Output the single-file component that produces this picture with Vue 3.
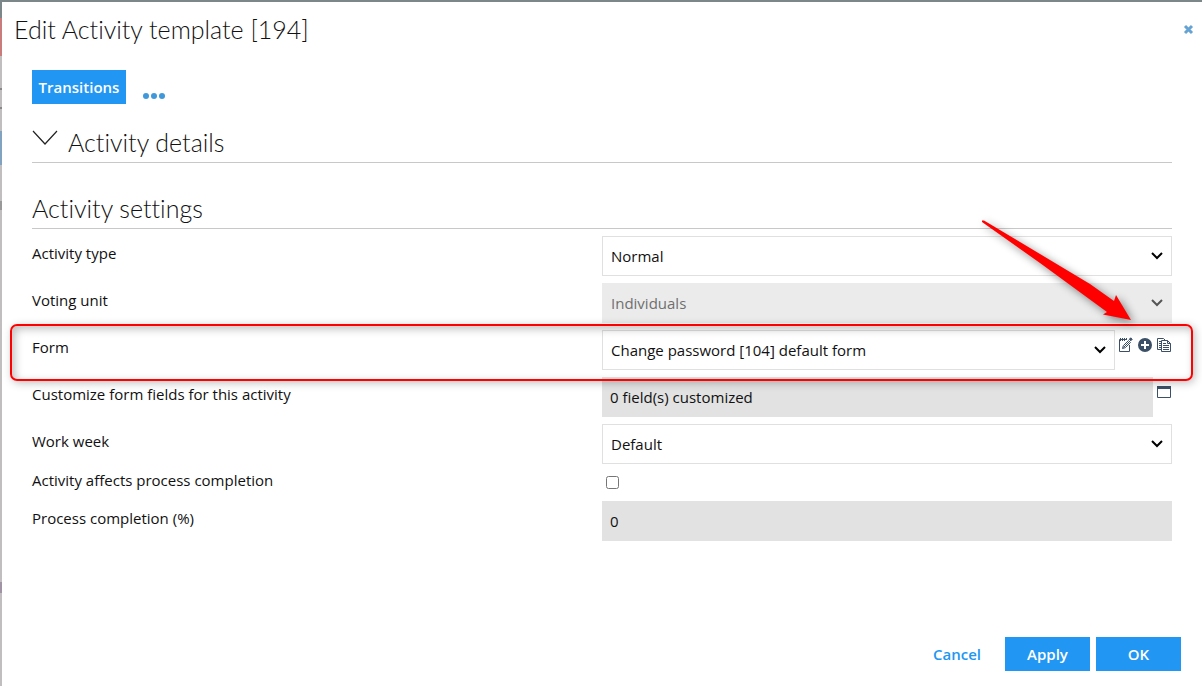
<script setup>
import { ref } from 'vue'

const activityType = ref('Normal')
const votingUnit = ref('Individuals')
const form = ref('Change password [104] default form')
const customized = ref('0 field(s) customized')
const workWeek = ref('Default')
const affects = ref(false)
const completion = ref('0')
</script>

<template>
  <div class="backdrop">
    <main class="dialog" role="dialog" aria-labelledby="dialog-title">
      <header class="head">
        <h1 id="dialog-title">Edit Activity template [194]</h1>
        <button class="icon-btn" type="button" aria-label="Close">
          <svg width="11" height="11" viewBox="0 0 11 11"><path d="M2 2l7 7M9 2l-7 7" stroke="#66a3d3" stroke-width="3" /></svg>
        </button>
      </header>

      <div class="body">
        <div class="toolbar">
          <button class="primary tab" type="button">Transitions</button>
          <button class="icon-btn more" type="button" aria-label="More">
            <svg width="24" height="8" viewBox="0 0 24 8" fill="#3f98da"><circle cx="4" cy="4" r="3" /><circle cx="12" cy="4" r="3" /><circle cx="20" cy="4" r="3" /></svg>
          </button>
        </div>

        <h2 class="section details">
          <button class="icon-btn" type="button" aria-label="Expand activity details">
            <svg width="26" height="16" viewBox="0 0 26 16"><path d="M1 1l12 13L25 1" fill="none" stroke="#222" stroke-width="1.2" /></svg>
          </button>
          <span>Activity details</span>
        </h2>
        <h2 class="section settings">Activity settings</h2>

        <form class="rows" @submit.prevent>
          <div class="row">
            <label for="type">Activity type</label>
            <div class="pick">
              <select id="type" v-model="activityType"><option>Normal</option></select>
              <svg width="14" height="10" viewBox="0 0 14 10"><path d="M2 2l5 5 5-5" /></svg>
            </div>
          </div>
          <div class="row">
            <label for="unit">Voting unit</label>
            <div class="pick off">
              <select id="unit" v-model="votingUnit" disabled><option>Individuals</option></select>
              <svg width="14" height="10" viewBox="0 0 14 10"><path d="M2 2l5 5 5-5" /></svg>
            </div>
          </div>
          <div class="row">
            <label for="form">Form</label>
            <div class="group">
              <div class="pick">
                <select id="form" v-model="form"><option>Change password [104] default form</option></select>
                <svg width="14" height="10" viewBox="0 0 14 10"><path d="M2 2l5 5 5-5" /></svg>
              </div>
              <div class="tools">
                <button class="icon-btn" type="button" aria-label="Edit form">
                  <svg width="15" height="16" viewBox="0 0 15 16" fill="none" stroke="#3b4f66">
                    <path d="M9 2.500H1.500v12h10V8" />
                    <path d="M2.500 1v3M4.500 1v3M6.500 1v3M8.500 1v2" />
                    <path d="M4.500 11.500l.8-2.800L10.500 3.500l2 2-5.200 5.200z" />
                    <path d="M5.500 10.500L11.500 4.500" />
                    <path d="M11.300 2.300l1.400-1.500 1.500 1.500-1.400 1.500z" fill="#3b4f66" />
                  </svg>
                </button>
                <button class="icon-btn" type="button" aria-label="Add form">
                  <svg width="14" height="16" viewBox="0 0 14 16"><circle cx="7" cy="8" r="7" fill="#3b4f66" /><path d="M7 4v8M3 8h8" stroke="#fff" stroke-width="2" /></svg>
                </button>
                <button class="icon-btn" type="button" aria-label="Copy form">
                  <svg width="15" height="16" viewBox="0 0 15 16" fill="none" stroke="#3b4f66">
                    <path d="M4 12.500H.5V1.500h6l2 2" />
                    <path d="M2 4.500h2M2 6.500h2M2 8.500h2M2 10.500h2" />
                    <path d="M4.500 3.500h6l3 3v8h-9z" fill="#fff" />
                    <path d="M10.500 3.500v3h3M6 6.500h3M6 8.500h6M6 10.500h6M6 12.500h6" />
                  </svg>
                </button>
              </div>
            </div>
            <div class="outline" aria-hidden="true"></div>
            <svg class="arrow" width="170" height="120" viewBox="0 0 170 120" aria-hidden="true">
              <path d="M2 10.500L4 10.500L60 44L110 74L134 91L136 85L151 110L123 104.500L127 102L60 53L2 12Z" fill="#f00" />
            </svg>
          </div>
          <div class="row">
            <label for="custom">Customize form fields for this activity</label>
            <div class="group custom">
              <input id="custom" v-model="customized" type="text" readonly />
              <div class="tools">
                <button class="icon-btn" type="button" aria-label="Open field list">
                  <svg width="14" height="12" viewBox="0 0 14 12"><path d="M.5.5h13v11H.5z" fill="#fff" stroke="#3b4f66" /><path d="M0 0h14v3H0z" fill="#3b4f66" /></svg>
                </button>
              </div>
            </div>
          </div>
          <div class="row">
            <label for="week">Work week</label>
            <div class="pick">
              <select id="week" v-model="workWeek"><option>Default</option></select>
              <svg width="14" height="10" viewBox="0 0 14 10"><path d="M2 2l5 5 5-5" /></svg>
            </div>
          </div>
          <div class="row check">
            <label for="affects">Activity affects process completion</label>
            <input id="affects" v-model="affects" type="checkbox" />
          </div>
          <div class="row">
            <label for="completion">Process completion (%)</label>
            <input id="completion" v-model="completion" type="text" readonly />
          </div>
        </form>
      </div>

      <footer class="foot">
        <button class="cancel" type="button">Cancel</button>
        <button class="primary" type="button">Apply</button>
        <button class="primary" type="button">OK</button>
      </footer>
    </main>
  </div>
</template>

<style>
body {
  margin: 0;
}
</style>

<style scoped>
.backdrop,
.backdrop * {
  box-sizing: border-box;
}
.backdrop {
  display: flex;
  min-height: 100vh;
  padding: 2px 0 0 2px;
  font: 15px/18px "Open Sans", sans-serif;
  color: #111;
  background:
    linear-gradient(#7b8788, #7b8788) top / 100% 2px no-repeat,
    linear-gradient(#7b8788 18px, #c87c7c 18px 56px, #c0bebe 56px 88px, #888 88px 90px, #c0bebe 90px 107px, #888 107px 109px, #c0bebe 109px 131px, #82a3c0 131px 165px, #c0bebe 165px 201px, #999 201px 210px, #c0bebe 210px 582px, #a094a4 582px 593px, #c0bebe 593px);
}
.dialog {
  flex: 1;
  display: flex;
  flex-direction: column;
  background: #fff;
}
button,
input,
select {
  margin: 0;
  font: inherit;
}
.icon-btn {
  display: block;
  padding: 0;
  border: 0;
  background: none;
  cursor: pointer;
}
.icon-btn svg {
  display: block;
}
.head {
  display: flex;
  align-items: center;
  justify-content: space-between;
  height: 54px;
  padding: 0 8px 0 12px;
}
h1,
h2 {
  margin: 0;
  font: 300 25px/32px Lato, sans-serif;
  font-variant-ligatures: none;
  color: #111;
}
.body {
  padding: 14px 30px 0;
}
.toolbar {
  display: flex;
  align-items: center;
  gap: 16px;
}
.primary {
  width: 85px;
  height: 34px;
  padding: 0;
  border: 0;
  background: #2196f3;
  color: #fff;
  font-weight: 600;
}
.tab {
  width: 94px;
}
.more {
  padding-top: 18px;
}
.section {
  display: flex;
  align-items: flex-end;
  border-bottom: 1px solid #c8c8c8;
}
.details {
  gap: 10px;
  height: 59px;
  padding-bottom: 4px;
}
.details .icon-btn {
  padding-bottom: 12px;
}
.settings {
  height: 66px;
  padding-bottom: 4px;
}
.rows {
  display: grid;
  gap: 7px;
  padding: 7px 0;
}
.row {
  position: relative;
  display: grid;
  grid-template-columns: 1fr 1fr;
  align-items: start;
}
.row label {
  padding-top: 8px;
}
select,
input[type="text"] {
  width: 100%;
  min-width: 0;
  height: 40px;
  border-radius: 0;
  color: #111;
}
.pick {
  display: grid;
  align-items: center;
}
.pick > * {
  grid-area: 1 / 1;
}
.pick svg {
  justify-self: end;
  margin-right: 8px;
  fill: none;
  stroke: #000;
  stroke-width: 2;
  pointer-events: none;
}
.pick.off svg {
  stroke: #555;
}
select {
  appearance: none;
  padding: 0 8px;
  border: 1px solid #e0e0e0;
  background: #fff;
  line-height: 24px;
}
select:disabled {
  border-color: #ebebeb;
  background: #ebebeb;
  color: #6f6f6f;
  opacity: 1;
}
input[type="text"] {
  padding: 0 8px;
  border: 0;
  background: #e2e2e2;
}
.group {
  display: grid;
  grid-template-columns: 1fr 57px;
}
.group.custom {
  grid-template-columns: 1fr 19px;
}
.tools {
  display: flex;
  align-items: flex-start;
  gap: 5px;
  padding: 7px 0 0 3px;
}
.custom .tools {
  padding: 9px 0 0 4px;
}
.check {
  height: 23px;
}
.check label {
  padding-top: 0;
}
.check input {
  width: 13px;
  height: 13px;
  margin: 5px 4px;
}
.outline {
  position: absolute;
  inset: -6px -21px -11px -22px;
  z-index: 1;
  border: 2px solid #f00;
  border-radius: 7px;
  box-shadow: 2px 2px 8px rgba(0, 0, 0, 0.25), inset 3px 3px 8px rgba(0, 0, 0, 0.25);
  pointer-events: none;
}
.arrow {
  position: absolute;
  right: 22px;
  bottom: 40px;
  z-index: 2;
  filter: drop-shadow(3px 3px 4px rgba(0, 0, 0, 0.45));
  pointer-events: none;
}
.foot {
  display: flex;
  align-items: center;
  gap: 6px;
  margin-top: auto;
  padding: 0 21px 15px;
  justify-content: flex-end;
}
.cancel {
  height: 34px;
  padding: 0 18px;
  border: 0;
  background: none;
  color: #2196f3;
  font-weight: 600;
}
</style>
